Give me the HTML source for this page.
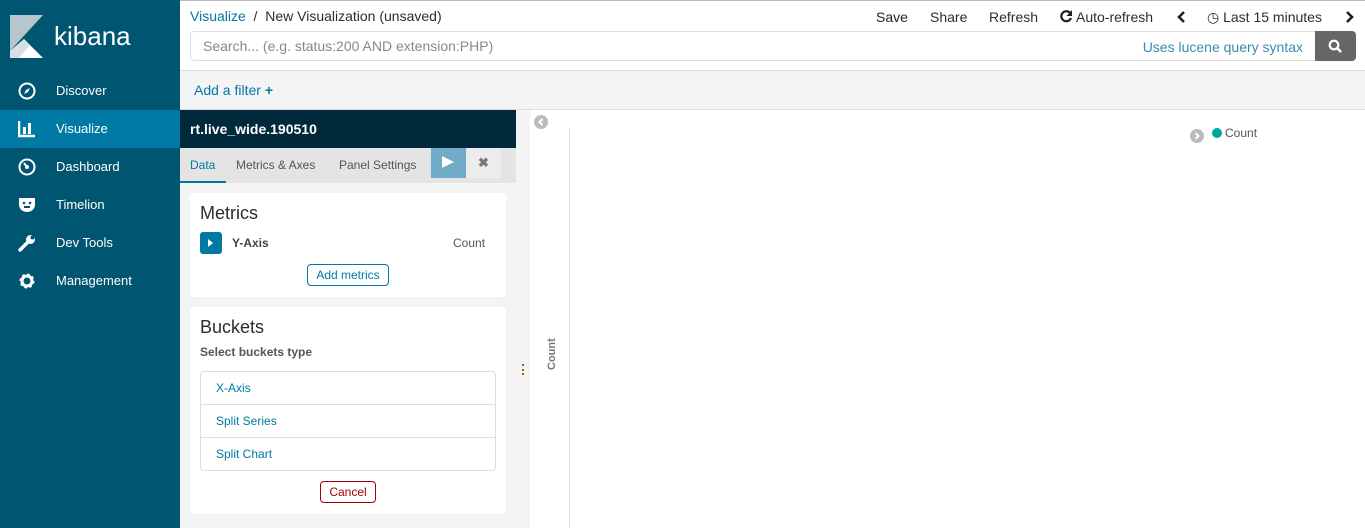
<!DOCTYPE html>
<html><head><style>
*{box-sizing:border-box;margin:0;padding:0}
body{width:1365px;height:528px;overflow:hidden;font-family:"Liberation Sans",sans-serif;background:#fff;position:relative;font-size:13px;color:#2d2d2d}
.a{position:absolute}
.side{left:0;top:0;width:180px;height:528px;background:#005571}
.nav{left:0;width:180px;height:38px;color:#fff;font-size:13px;line-height:38px;padding-left:56px}
.nav svg{position:absolute;left:18px;top:10px}
.sel{background:#0079a5}
</style></head><body>
<div class="a" style="left:0;top:0;width:1365px;height:1px;background:#bbb"></div>
<div class="a side"></div>
<svg class="a" style="left:10px;top:15px" width="34" height="43" viewBox="0 0 34 43"><polygon points="0,0 33,0 0,36" fill="#b5c7cc"/><polygon points="0,43 0,36 14,24 33,43" fill="#fff"/><polygon points="0,36 14,24 20,30 9,43 0,43" fill="#d7e0e2"/></svg>
<div class="a" style="left:54px;top:21px;color:#fff;font-size:26px">kibana</div>
<div class="a nav" style="top:72px"><svg width="18" height="18" viewBox="0 0 18 18"><circle cx="9" cy="9" r="7.5" fill="none" stroke="#fff" stroke-width="2"/><polygon points="12,6 10,10 6,12 8,8" fill="#fff"/></svg>Discover</div>
<div class="a nav sel" style="top:110px"><svg width="18" height="18" viewBox="0 0 18 18"><path d="M1 1V16H17" fill="none" stroke="#fff" stroke-width="2.5"/><rect x="5" y="7" width="3" height="7" fill="#fff"/><rect x="10" y="3" width="3" height="11" fill="#fff"/></svg>Visualize</div>
<div class="a nav" style="top:148px"><svg width="18" height="18" viewBox="0 0 18 18"><circle cx="9" cy="9" r="7.5" fill="none" stroke="#fff" stroke-width="2"/><circle cx="9" cy="9" r="2" fill="#fff"/><path d="M9 9L6 5" stroke="#fff" stroke-width="2"/></svg>Dashboard</div>
<div class="a nav" style="top:186px"><svg width="18" height="18" viewBox="0 0 18 18"><path d="M1 2h16v7c0 4-4 7-8 7S1 13 1 9z" fill="#fff"/><circle cx="6" cy="7" r="1.3" fill="#005571"/><circle cx="12" cy="7" r="1.3" fill="#005571"/><rect x="6" y="10" width="6" height="2" fill="#005571"/></svg>Timelion</div>
<div class="a nav" style="top:224px"><svg width="18" height="18" viewBox="0 0 18 18"><path d="M2 16L10 8" stroke="#fff" stroke-width="3.5" stroke-linecap="round"/><circle cx="12.5" cy="5.5" r="4.5" fill="#fff"/><circle cx="14.5" cy="3.5" r="2" fill="#005571"/></svg>Dev Tools</div>
<div class="a nav" style="top:262px"><svg width="18" height="18" viewBox="0 0 18 18"><circle cx="9" cy="9" r="5.5" fill="none" stroke="#fff" stroke-width="4" stroke-dasharray="2.2 2.1"/><circle cx="9" cy="9" r="5" fill="none" stroke="#fff" stroke-width="3"/><circle cx="9" cy="9" r="2" fill="#005571"/></svg>Management</div>

<div class="a" style="left:190px;top:8px;font-size:14px"><span style="color:#0079a5">Visualize</span> &nbsp;/&nbsp; New Visualization (unsaved)</div>
<div class="a" style="left:876px;top:9px;font-size:14px;color:#222">Save</div>
<div class="a" style="left:930px;top:9px;font-size:14px">Share</div>
<div class="a" style="left:989px;top:9px;font-size:14px">Refresh</div>
<svg class="a" style="left:1060px;top:10px" width="13" height="13" viewBox="0 0 13 13"><path d="M10.5 3.5A5 5 0 1 0 11 8" fill="none" stroke="#222" stroke-width="2.2"/><polygon points="12,0 12,6 6.5,6" fill="#222"/></svg>
<div class="a" style="left:1076px;top:9px;font-size:14px">Auto-refresh</div>
<svg class="a" style="left:1177px;top:11px" width="9" height="12"><path d="M7 1L2 6L7 11" fill="none" stroke="#222" stroke-width="2.6"/></svg>
<div class="a" style="left:1207px;top:9px;font-size:14px">&#9719; Last 15 minutes</div>
<svg class="a" style="left:1345px;top:11px" width="9" height="12"><path d="M2 1L7 6L2 11" fill="none" stroke="#222" stroke-width="2.6"/></svg>
<div class="a" style="left:190px;top:31px;width:1126px;height:30px;border:1px solid #ddd;border-radius:4px 0 0 4px;padding:6px 12px;font-size:14px;color:#888">Search... (e.g. status:200 AND extension:PHP)<span style="position:absolute;right:12px;top:7px;color:#3a8bb0">Uses lucene query syntax</span></div>
<div class="a" style="left:1315px;top:31px;width:41px;height:30px;background:#666;border-radius:0 4px 4px 0"><svg style="position:absolute;left:13px;top:8px" width="15" height="15"><circle cx="6" cy="6" r="4.3" fill="none" stroke="#fff" stroke-width="2.2"/><path d="M9 9L13 13" stroke="#fff" stroke-width="2.6"/></svg></div>
<div class="a" style="left:180px;top:70px;width:1185px;height:40px;background:#f4f4f4;border-top:1px solid #ddd;border-bottom:1px solid #ddd"></div>
<div class="a" style="left:194px;top:82px;font-size:14px;color:#0079a5">Add a filter <b>+</b></div>

<div class="a" style="left:180px;top:110px;width:350px;height:418px;background:#f4f4f4"></div>
<div class="a" style="left:180px;top:110px;width:336px;height:38px;background:#002a3b;color:#fff;font-weight:bold;font-size:14px;padding:11px 10px">rt.live_wide.190510</div>
<div class="a" style="left:180px;top:148px;width:336px;height:35px;background:#e4e4e4"></div>
<div class="a" style="left:180px;top:148px;width:46px;height:35px;border-bottom:2px solid #0079a5;color:#0079a5;font-size:12px;padding:10px 10px">Data</div>
<div class="a" style="left:236px;top:158px;font-size:12px;color:#555">Metrics &amp; Axes</div>
<div class="a" style="left:339px;top:158px;font-size:12px;color:#555">Panel Settings</div>
<div class="a" style="left:431px;top:148px;width:35px;height:30px;background:#71abc7"><svg style="position:absolute;left:11px;top:8px" width="12" height="13"><polygon points="0,0 12,6 0,12" fill="#fff"/></svg></div>
<div class="a" style="left:466px;top:148px;width:35px;height:30px;background:#ececec;color:#777;text-align:center;line-height:30px;font-weight:bold">&#10006;</div>

<div class="a" style="left:190px;top:193px;width:316px;height:104px;background:#fff;border-radius:4px"></div>
<div class="a" style="left:200px;top:203px;font-size:18px;color:#2d2d2d">Metrics</div>
<div class="a" style="left:200px;top:232px;width:22px;height:22px;background:#0079a5;border-radius:3px"><svg style="position:absolute;left:8px;top:7px" width="6" height="8"><polygon points="0,0 5,4 0,8" fill="#fff"/></svg></div>
<div class="a" style="left:232px;top:236px;font-size:12px;font-weight:bold;color:#444">Y-Axis</div>
<div class="a" style="left:453px;top:236px;font-size:12px;color:#555">Count</div>
<div class="a" style="left:307px;top:264px;width:82px;height:22px;border:1px solid #0079a5;border-radius:4px;color:#0079a5;font-size:12px;text-align:center;line-height:20px">Add metrics</div>

<div class="a" style="left:190px;top:307px;width:316px;height:207px;background:#fff;border-radius:4px"></div>
<div class="a" style="left:200px;top:317px;font-size:18px">Buckets</div>
<div class="a" style="left:200px;top:345px;font-size:12px;font-weight:bold;color:#555">Select buckets type</div>
<div class="a" style="left:200px;top:371px;width:296px;height:100px;border:1px solid #ddd;border-radius:4px"></div>
<div class="a" style="left:201px;top:404px;width:294px;height:1px;background:#ddd"></div>
<div class="a" style="left:201px;top:437px;width:294px;height:1px;background:#ddd"></div>
<div class="a" style="left:216px;top:381px;font-size:12px;color:#0079a5">X-Axis</div>
<div class="a" style="left:216px;top:414px;font-size:12px;color:#0079a5">Split Series</div>
<div class="a" style="left:216px;top:447px;font-size:12px;color:#0079a5">Split Chart</div>
<div class="a" style="left:320px;top:481px;width:56px;height:22px;border:1px solid #a30000;border-radius:4px;color:#a30000;font-size:12px;text-align:center;line-height:20px">Cancel</div>

<div class="a" style="left:522px;top:364px;width:2px;height:11px;border-left:2px dotted #a06000"></div>
<svg class="a" style="left:534px;top:115px" width="14" height="14"><circle cx="7" cy="7" r="7" fill="#bbb"/><path d="M8.5 4L5.5 7L8.5 10" fill="none" stroke="#fff" stroke-width="2"/></svg>
<div class="a" style="left:569px;top:128px;width:1px;height:400px;background:#ddd"></div>
<div class="a" style="left:546px;top:370px;transform:rotate(-90deg);transform-origin:0 0;font-size:11px;font-weight:bold;color:#777">Count</div>
<svg class="a" style="left:1190px;top:129px" width="14" height="14"><circle cx="7" cy="7" r="7" fill="#bbb"/><path d="M5.5 4L8.5 7L5.5 10" fill="none" stroke="#fff" stroke-width="2"/></svg>
<div class="a" style="left:1212px;top:128px;width:10px;height:10px;border-radius:50%;background:#00a69b"></div>
<div class="a" style="left:1225px;top:126px;font-size:12px;color:#555">Count</div>
</body></html>
